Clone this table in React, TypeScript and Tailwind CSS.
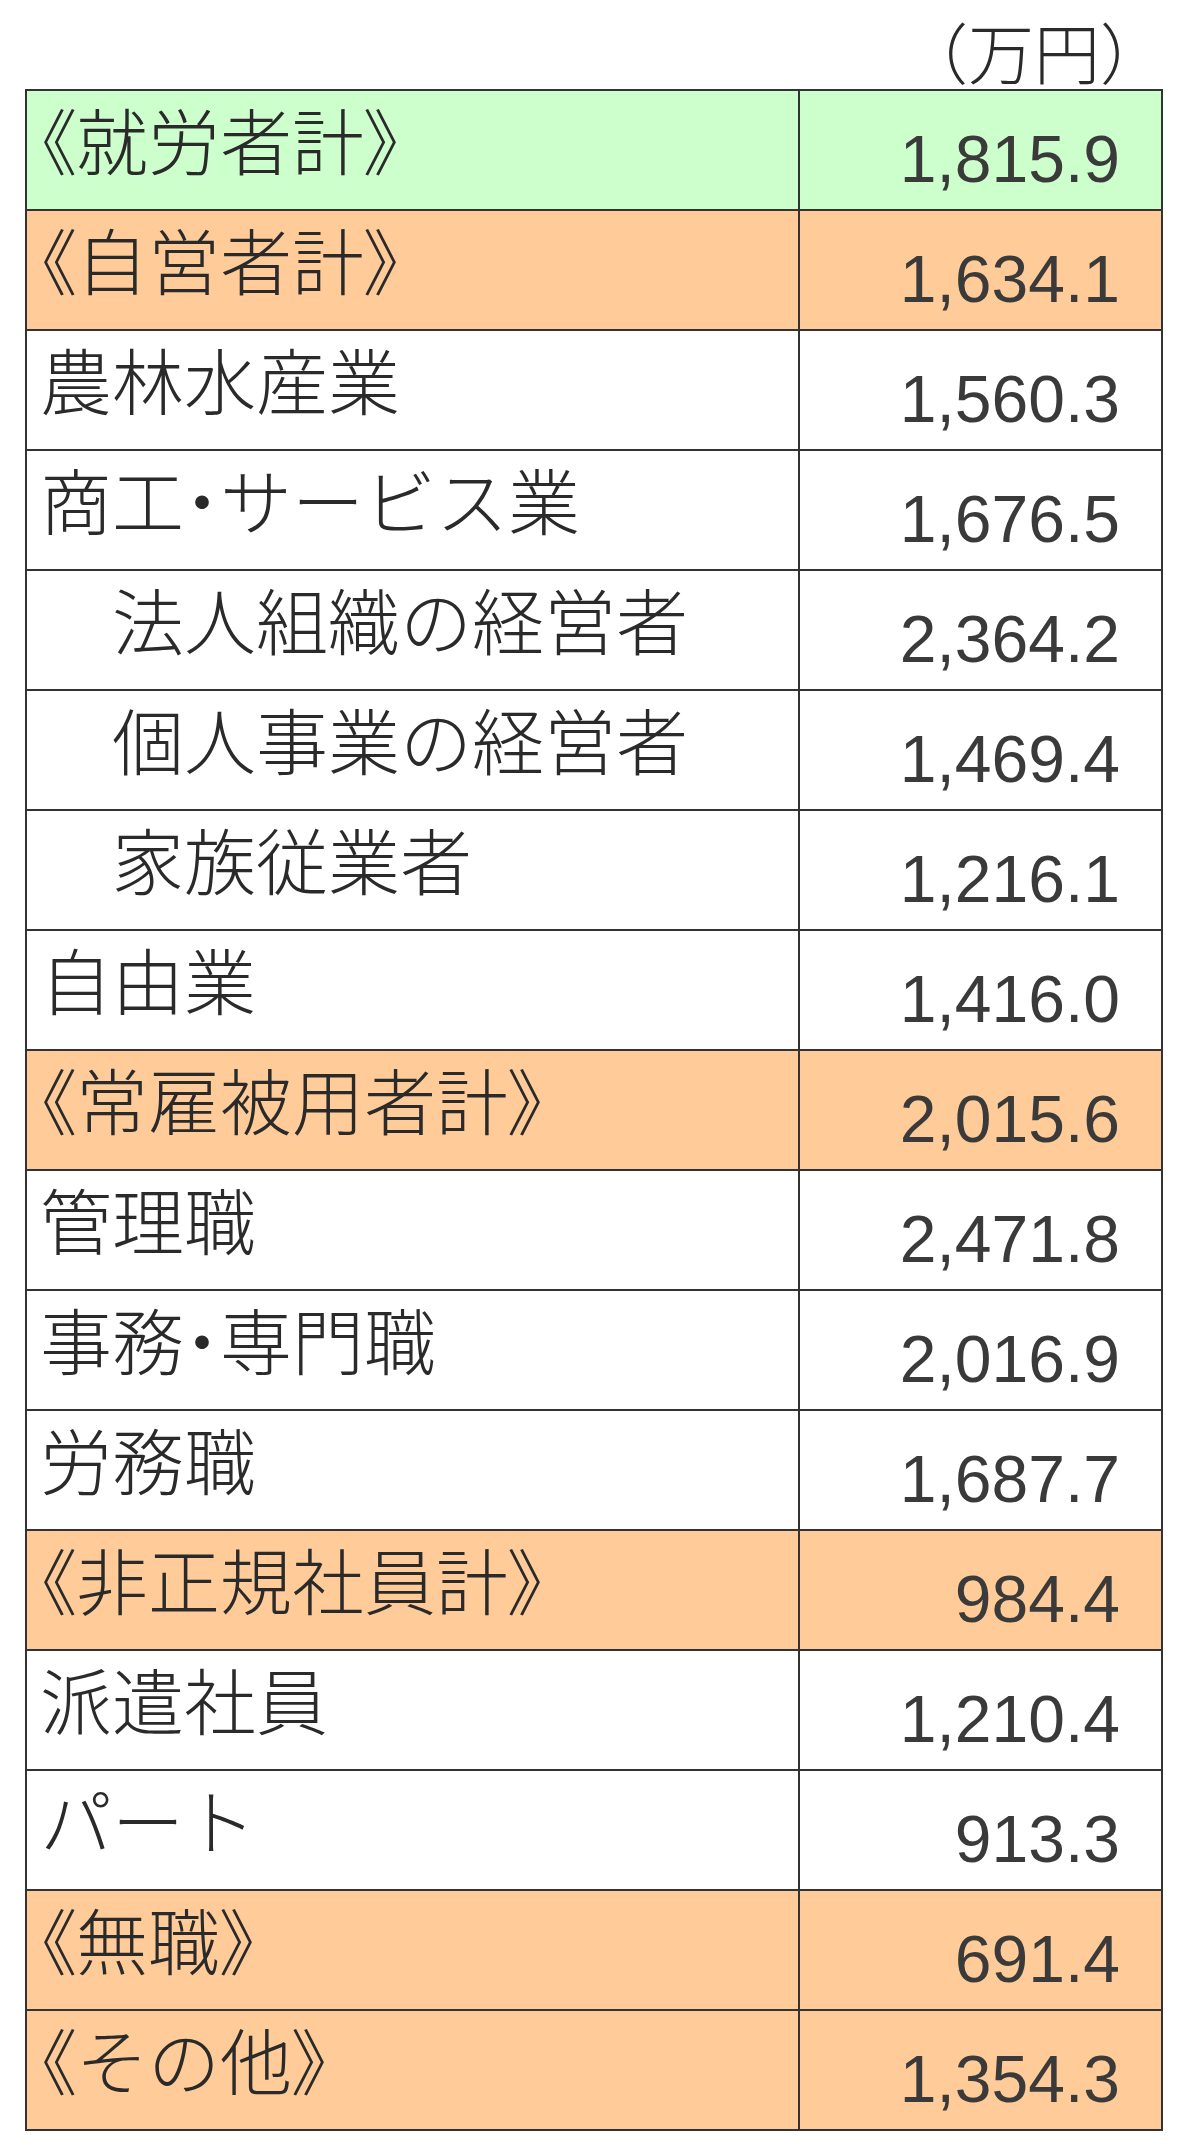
import clsx from 'clsx';

type Tone = 'green' | 'orange' | 'plain';

interface IncomeRow {
  label: string;
  value: string;
  tone?: Tone;
  indent?: boolean;
}

// 世帯主の職業別 平均値（万円）
const rows: IncomeRow[] = [
  { label: '《就労者計》', value: '1,815.9', tone: 'green' },
  { label: '《自営者計》', value: '1,634.1', tone: 'orange' },
  { label: '農林水産業', value: '1,560.3' },
  { label: '商工・サービス業', value: '1,676.5' },
  { label: '法人組織の経営者', value: '2,364.2', indent: true },
  { label: '個人事業の経営者', value: '1,469.4', indent: true },
  { label: '家族従業者', value: '1,216.1', indent: true },
  { label: '自由業', value: '1,416.0' },
  { label: '《常雇被用者計》', value: '2,015.6', tone: 'orange' },
  { label: '管理職', value: '2,471.8' },
  { label: '事務・専門職', value: '2,016.9' },
  { label: '労務職', value: '1,687.7' },
  { label: '《非正規社員計》', value: '984.4', tone: 'orange' },
  { label: '派遣社員', value: '1,210.4' },
  { label: 'パート', value: '913.3' },
  { label: '《無職》', value: '691.4', tone: 'orange' },
  { label: '《その他》', value: '1,354.3', tone: 'orange' },
];

const toneClass: Record<Tone, string> = {
  green: 'bg-[#ccffcc]',
  orange: 'bg-[#ffcc99]',
  plain: 'bg-white',
};

// brackets and the middle dot are proportional in the original sheet
const NARROW = /([《》・])/;

function Label({ text }: { text: string }) {
  return (
    <span>
      {text.split(NARROW).map((part, i) =>
        NARROW.test(part) ? (
          <span key={i} className="[font-feature-settings:'palt']">
            {part}
          </span>
        ) : (
          <span key={i}>{part}</span>
        ),
      )}
    </span>
  );
}

export default function App() {
  return (
    <div className="min-h-[2152px] w-[1200px] bg-white font-['Noto_Sans_CJK_JP',sans-serif] font-light text-[#2a2a2a]">
      {/* Unit */}
      <div className="w-[1166px] pt-[17px] text-right text-[66px] leading-none">
        （万円）
      </div>

      {/* Table */}
      <div className="mt-[6px] ml-[25px] w-[1138px] border-2 border-[#333]">
        {rows.map((row) => (
          <div
            key={row.label}
            className={clsx(
              'flex h-[120px] border-b-2 border-[#333] last:h-[118px] last:border-b-0',
              toneClass[row.tone ?? 'plain'],
            )}
          >
            <div
              className={clsx(
                'flex w-[773px] items-center border-r-2 border-[#333] pb-[25px] text-[72px] leading-none whitespace-nowrap',
                row.indent ? 'pl-[85px]' : 'pl-[13px]',
              )}
            >
              <Label text={row.label} />
            </div>
            <div className="flex flex-1 items-end justify-end pr-[41px] pb-[17px] font-['Liberation_Sans',sans-serif] text-[66px] font-normal leading-none text-[#3a3a3a]">
              {row.value}
            </div>
          </div>
        ))}
      </div>
    </div>
  );
}
